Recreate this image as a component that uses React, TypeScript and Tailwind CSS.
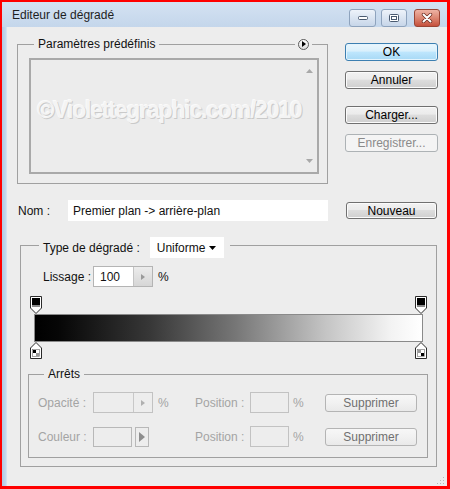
import React from "react";

type BtnProps = {
  children: React.ReactNode;
  className?: string;
  variant?: "normal" | "primary" | "disabled" | "soft";
};

function Btn({ children, className = "", variant = "normal" }: BtnProps) {
  const look =
    variant === "primary"
      ? "border-[#3c7fb1] bg-[linear-gradient(#eaf6fd,#d9f0fc_45%,#bee6fd_50%,#a7d9f5)] shadow-[inset_0_0_0_1px_#e4f4fd] text-black"
      : variant === "disabled"
        ? "border-[#adb2b5] bg-[#f4f4f4] text-[#8a8a8a]"
        : variant === "soft"
          ? "border-[#b4b4b4] bg-[linear-gradient(#f7f7f7,#f1f1f1_50%,#e9e9e9)] text-[#707070]"
          : "border-[#707070] bg-[linear-gradient(#f2f2f2,#ebebeb_45%,#dddddd_50%,#cfcfcf)] shadow-[inset_0_0_0_1px_#fbfbfb] text-black";
  return (
    <div className={`flex items-center justify-center rounded-[3px] border ${look} ${className}`}>
      {children}
    </div>
  );
}

function TitleBar() {
  return (
    <div className="flex h-[25px] items-start bg-[linear-gradient(#d4e2f2,#c4d6eb)]">
      <div className="pl-[10px] pt-[5px] text-[12px] leading-[16px] text-[#1e1e1e]">Editeur de dégradé</div>
      <div className="ml-auto mr-[7px] mt-[7px] flex">
        <div className="flex h-[18px] w-[27px] items-center justify-center rounded-[3px] border border-[#8ea3bd] bg-[linear-gradient(#eef3fa,#dae4f1_50%,#c7d6e9)]">
          <svg width="12" height="6" viewBox="0 0 12 6">
            <rect x="1.5" y="1.5" width="9" height="3" rx="1" fill="#fff" stroke="#4a5a70" />
          </svg>
        </div>
        <div className="ml-[5px] flex h-[18px] w-[26px] items-center justify-center rounded-[3px] border border-[#8ea3bd] bg-[linear-gradient(#eef3fa,#dae4f1_50%,#c7d6e9)]">
          <svg width="12" height="10" viewBox="0 0 12 10">
            <rect x="1.5" y="1.5" width="9" height="7" rx="1" fill="#fff" stroke="#4a5a70" />
            <rect x="3.5" y="3.5" width="5" height="3" fill="none" stroke="#4a5a70" />
          </svg>
        </div>
        <div className="ml-[7px] flex h-[18px] w-[26px] items-center justify-center rounded-[3px] border border-[#9a4535] bg-[linear-gradient(#eeb3a4,#dc8672_50%,#c5503c)]">
          <svg width="12" height="10" viewBox="0 0 12 10">
            <path d="M2.5 1.5 L9.5 8.5 M9.5 1.5 L2.5 8.5" stroke="#6b2b1f" strokeWidth="3.4" strokeLinecap="round" />
            <path d="M2.5 1.5 L9.5 8.5 M9.5 1.5 L2.5 8.5" stroke="#fff" strokeWidth="2" strokeLinecap="round" />
          </svg>
        </div>
      </div>
    </div>
  );
}

function TopStop() {
  return (
    <svg width="12" height="18" viewBox="0 0 12 18">
      <path d="M0.5 0.5 H11.5 V12 L6 17.5 L0.5 12 Z" fill="#fff" stroke="#2a2a2a" />
      <rect x="2" y="2" width="8" height="7" fill="#000" />
      <rect x="2" y="9" width="8" height="2" fill="#8a8a8a" />
    </svg>
  );
}

function BottomStop({ flip = false }: { flip?: boolean }) {
  return (
    <svg width="12" height="17" viewBox="0 0 12 17">
      <path d="M6 0.5 L11.5 6 V16.5 H0.5 V6 Z" fill="#fff" stroke="#2a2a2a" />
      <rect x="2.5" y="7.5" width="7" height="7" fill="#fff" stroke="#6a6a6a" strokeWidth="0.6" />
      <rect x="3" y="8" width="3" height="3" fill={flip ? "#9a9a9a" : "#000"} />
      <rect x="6" y="11" width="3" height="3" fill={flip ? "#000" : "#9a9a9a"} />
    </svg>
  );
}

function SmallArrow({ color = "#8a8a8a" }: { color?: string }) {
  return (
    <svg width="4" height="6" viewBox="0 0 4 6">
      <path d="M0 0 L4 3 L0 6 Z" fill={color} />
    </svg>
  );
}

export default function App() {
  return (
    <div className="flex h-[489px] w-[450px] flex-col bg-[#ff0000] pb-[3px] pl-[2px] pr-[3px] pt-[2px] font-['Liberation_Sans',Arial,sans-serif] text-[12px] leading-[16px] text-[#111]">
      <TitleBar />
      <div className="flex flex-1">
        <div className="w-[5px] bg-[linear-gradient(to_right,#b1c9e3,#c3d7ec_70%,#dbe6f2)]" />
        <div className="flex flex-1 flex-col bg-[#ededed]">
          {/* presets + buttons */}
          <div className="flex items-start pt-[16px]">
            <div className="ml-[10px] mt-[1px] h-[140px] w-[311px] border border-[#a0a0a0]">
              <div className="-mt-[9px] flex h-[16px] items-center pl-[16px] pr-[15px]">
                <span className="bg-[#ededed] px-[4px]">Paramètres prédéfinis</span>
                <span className="ml-auto flex bg-[#ededed] px-[3px]">
                  <span className="flex h-[11px] w-[11px] items-center justify-center rounded-full border border-[#5a5a5a] bg-[linear-gradient(#ffffff,#dcdcdc)] pl-[1px]">
                    <SmallArrow color="#000" />
                  </span>
                </span>
              </div>
              <div className="ml-[11px] mt-[6px] flex h-[116px] w-[290px] border-2 border-[#a9a9a9] bg-[#ececec]">
                <div className="flex flex-1 items-center justify-center pb-[12px] pl-[6px]">
                  <span className="text-[23px] font-bold leading-[26px] tracking-[-1.2px] text-[#f4f4f4] [text-shadow:1px_1px_0_#cacaca,-1px_-1px_0_#fafafa]">
                    ©Violettegraphic.com/2010
                  </span>
                </div>
                <div className="flex w-[15px] flex-col items-center justify-between py-[9px]">
                  <svg width="7" height="4" viewBox="0 0 7 4">
                    <path d="M0 4 L3.5 0 L7 4 Z" fill="#a8a8a8" />
                  </svg>
                  <svg width="7" height="4" viewBox="0 0 7 4">
                    <path d="M0 0 L3.5 4 L7 0 Z" fill="#a8a8a8" />
                  </svg>
                </div>
              </div>
            </div>
            <div className="ml-[17px] flex w-[93px] flex-col">
              <Btn variant="primary" className="h-[18px]">OK</Btn>
              <Btn className="mt-[10px] h-[18px]">Annuler</Btn>
              <Btn className="mt-[17px] h-[18px]">Charger...</Btn>
              <Btn variant="disabled" className="mt-[10px] h-[18px]">Enregistrer...</Btn>
            </div>
          </div>

          {/* name row */}
          <div className="mt-[16px] flex h-[21px] items-center pl-[11px]">
            <span className="w-[50px]">Nom :</span>
            <div className="flex h-[21px] w-[260px] items-center bg-white pl-[5px]">Premier plan -&gt; arrière-plan</div>
            <Btn className="ml-[18px] h-[17px] w-[91px]">Nouveau</Btn>
          </div>

          {/* gradient type group */}
          <div className="ml-[13px] mt-[24px] h-[222px] w-[417px] border border-[#a0a0a0]">
            <div className="-mt-[9px] flex h-[21px] pl-[18px]">
              <div className="flex items-center bg-[#ededed] pl-[4px] pr-[6px]">
                <span>Type de dégradé :</span>
                <div className="ml-[10px] flex h-[21px] w-[74px] items-center bg-white pl-[7px]">
                  <span>Uniforme</span>
                  <svg className="ml-auto mr-[8px]" width="7" height="4" viewBox="0 0 7 4">
                    <path d="M0 0 L7 0 L3.5 4 Z" fill="#000" />
                  </svg>
                </div>
              </div>
            </div>

            <div className="mt-[8px] flex h-[21px] items-center pl-[22px]">
              <span className="w-[50px]">Lissage :</span>
              <div className="flex h-[21px] w-[60px] border border-[#b4b4b4]">
                <div className="flex w-[39px] items-center bg-white pl-[6px]">100</div>
                <div className="flex flex-1 items-center justify-center border-l border-[#c4c4c4] bg-[linear-gradient(#ececec,#d6d6d6)]">
                  <SmallArrow color="#9a9a9a" />
                </div>
              </div>
              <span className="ml-[5px]">%</span>
            </div>

            <div className="ml-[9px] mt-[9px] flex h-[18px] w-[397px] justify-between">
              <TopStop />
              <TopStop />
            </div>
            <div className="ml-[13px] h-[28px] w-[389px] border border-[#8a8a8a] bg-[linear-gradient(to_right,#000,#060606_6%,#383838_30%,#777777_52%,#c4c4c4_75%,#f3f3f3_92%,#fff)]" />
            <div className="ml-[9px] flex h-[17px] w-[397px] justify-between">
              <BottomStop />
              <BottomStop flip />
            </div>

            {/* stops group */}
            <div className="ml-[7px] mt-[15px] h-[84px] w-[400px] border border-[#a0a0a0]">
              <div className="-mt-[9px] flex h-[16px] pl-[15px]">
                <span className="bg-[#ededed] px-[4px]">Arrêts</span>
              </div>
              <div className="mt-[10px] flex h-[21px] items-center pl-[9px] text-[#a4a4a4]">
                <span className="w-[55px]">Opacité :</span>
                <div className="flex h-[21px] w-[60px] border border-[#c2c2c2]">
                  <div className="w-[39px]" />
                  <div className="flex flex-1 items-center justify-center border-l border-[#c8c8c8]">
                    <SmallArrow color="#b0b0b0" />
                  </div>
                </div>
                <span className="w-[42px] pl-[5px]">%</span>
                <span className="w-[55px]">Position :</span>
                <div className="h-[21px] w-[39px] border border-[#c2c2c2]" />
                <span className="w-[36px] pl-[4px]">%</span>
                <Btn variant="soft" className="h-[18px] w-[92px]">Supprimer</Btn>
              </div>
              <div className="mt-[13px] flex h-[21px] items-center pl-[9px] text-[#a4a4a4]">
                <span className="w-[55px]">Couleur :</span>
                <div className="flex w-[102px] items-center">
                  <div className="h-[20px] w-[39px] border border-[#b8b8b8]" />
                  <div className="ml-[3px] flex h-[20px] w-[14px] items-center justify-center border border-[#b8b8b8]">
                    <svg width="6" height="10" viewBox="0 0 6 10">
                      <path d="M0 0 L6 5 L0 10 Z" fill="#8e8e8e" />
                    </svg>
                  </div>
                </div>
                <span className="w-[55px]">Position :</span>
                <div className="h-[21px] w-[39px] border border-[#c2c2c2]" />
                <span className="w-[36px] pl-[4px]">%</span>
                <Btn variant="soft" className="h-[18px] w-[92px]">Supprimer</Btn>
              </div>
            </div>
          </div>

          <div className="mt-auto flex justify-end pb-[1px] pr-[2px]">
            <svg width="8" height="8" viewBox="0 0 8 8">
              <rect x="6" y="0" width="1" height="1" fill="#b8b8b8" />
              <rect x="3" y="3" width="1" height="1" fill="#b8b8b8" />
              <rect x="6" y="3" width="1" height="1" fill="#b8b8b8" />
              <rect x="0" y="6" width="1" height="1" fill="#b8b8b8" />
              <rect x="3" y="6" width="1" height="1" fill="#b8b8b8" />
              <rect x="6" y="6" width="1" height="1" fill="#b8b8b8" />
            </svg>
          </div>
        </div>
      </div>
    </div>
  );
}
